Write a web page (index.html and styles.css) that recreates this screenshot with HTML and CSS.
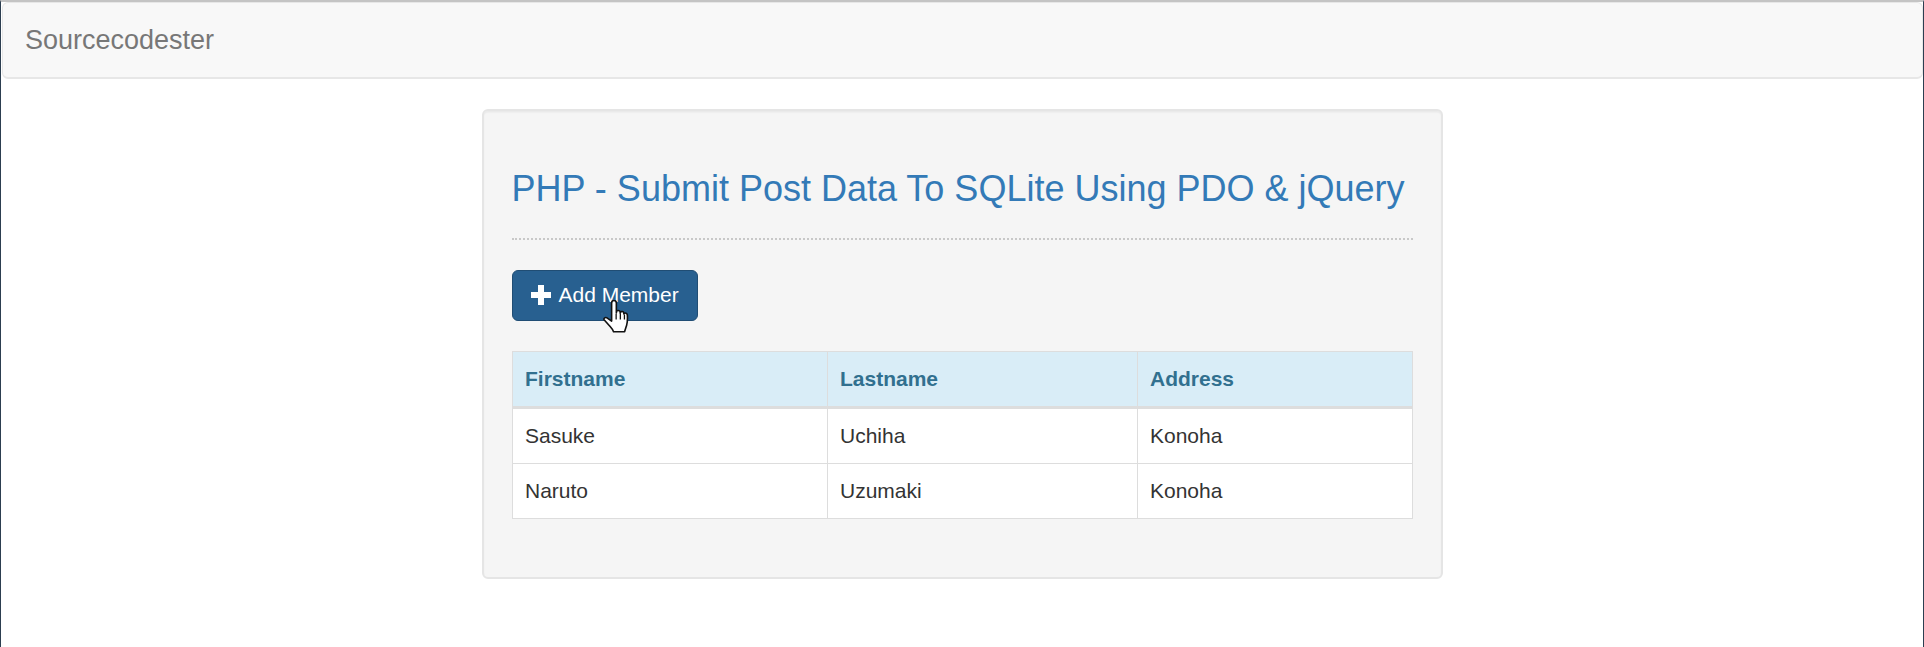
FILE: index.html
```html
<!DOCTYPE html>
<html lang="en">
<head>
<meta charset="utf-8">
<title>Sourcecodester</title>
<link rel="stylesheet" href="styles.css">
</head>
<body>
<div class="window">
  <nav class="navbar"><a class="brand" href="#">Sourcecodester</a></nav>
  <main class="well">
    <h3 class="title">PHP - Submit Post Data To SQLite Using PDO &amp; jQuery</h3>
    <hr class="rule">
    <button class="btn" type="button">
      <svg class="plus" viewBox="0 0 20 20" aria-hidden="true"><path d="M7 0h6v7h7v6h-7v7H7v-7H0V7h7z"/></svg>
      <span>Add Member</span>
      <svg class="cursor" viewBox="0 0 26 34" preserveAspectRatio="none" aria-hidden="true"><path d="M8 3c0-1.500 1-2.500 2.200-2.500S12.400 1.500 12.400 3v9.500l.2-1.500c.3-1.200 2.900-1.200 3.300.3l.1 1.500.2-.8c.5-1.200 2.800-1 3.100.5l.1 1 .4-.4c.7-.9 2.700-.3 2.800 1.300.2 3.500.2 7.500-.7 10.400-.9 2.900-1.500 4.400-1.800 6H9.800c-.5-2-2-3.700-3.600-5.600L1.200 19.500c-1-1.400.8-3.300 2.500-2.200L8 20.500z" fill="#fff" stroke="#111" stroke-width="1.500" stroke-linejoin="round"/><path d="M12.200 13v6M16.100 13v6M19.900 14v5" fill="none" stroke="#111" stroke-width="1.200"/></svg>
    </button>
    <table class="members">
      <colgroup><col class="c1"><col class="c2"><col class="c3"></colgroup>
      <thead><tr><th>Firstname</th><th>Lastname</th><th>Address</th></tr></thead>
      <tbody>
        <tr><td>Sasuke</td><td>Uchiha</td><td>Konoha</td></tr>
        <tr><td>Naruto</td><td>Uzumaki</td><td>Konoha</td></tr>
      </tbody>
    </table>
  </main>
</div>
</body>
</html>
```
FILE: styles.css
```css
* { box-sizing: border-box; }
html, body { margin: 0; padding: 0; background: #fff; }
body {
  font-family: "Liberation Sans", Arial, sans-serif;
  font-size: 21px;
  color: #333;
}
.window {
  height: 647px;
  overflow: hidden;
  border-top: 2px solid #c4c4c4;
  border-left: 1px solid #2c3e50;
  border-right: 1px solid #2c3e50;
}
.navbar {
  height: 77px;
  margin: 0 0 0 1px;
  padding: 0 0 0 22px;
  display: flex;
  align-items: center;
  background: #f8f8f8;
  border: 1px solid #e7e7e7;
  border-bottom-width: 2px;
  border-radius: 6px;
}
.brand { font-size: 27px; color: #777; text-decoration: none; }
.well {
  width: 961px;
  margin: 30px auto 0;
  padding: 28px 28px 58px;
  background: #f5f5f5;
  border: 2px solid #e5e5e5;
  border-radius: 6px;
  box-shadow: inset 0 1.500px 1.500px rgba(0,0,0,.05);
}
.title {
  margin: 30px 0 29.400px;
  font-size: 36px;
  font-weight: 400;
  line-height: 1.1;
  color: #337ab7;
}
.rule {
  margin: 0 0 30px;
  border: 0;
  border-top: 2px dotted #c8c8c8;
}
.btn {
  position: relative;
  display: flex;
  align-items: center;
  gap: 8px;
  width: 186px;
  height: 51px;
  padding: 0 0 0 18px;
  font: inherit;
  color: #fff;
  background: #286090;
  border: 1px solid #204d74;
  border-radius: 6px;
}
.plus { width: 20px; height: 20px; fill: #fff; }
.cursor { position: absolute; left: 90px; top: 29px; width: 28px; height: 35px; }
.members {
  width: 900px;
  margin-top: 30px;
  border-collapse: collapse;
  table-layout: fixed;
  background: #fff;
}
.c1 { width: 315px; }
.c2 { width: 310px; }
.c3 { width: 275px; }
.members th, .members td {
  padding: 12px 12px 12px 12.500px;
  height: 55px;
  line-height: 30px;
  text-align: left;
  border: 1px solid #ddd;
}
.members th {
  height: 56px;
  color: #31708f;
  background: #d9edf7;
  font-weight: 700;
  border-bottom: 3px solid #ddd;
}
```
